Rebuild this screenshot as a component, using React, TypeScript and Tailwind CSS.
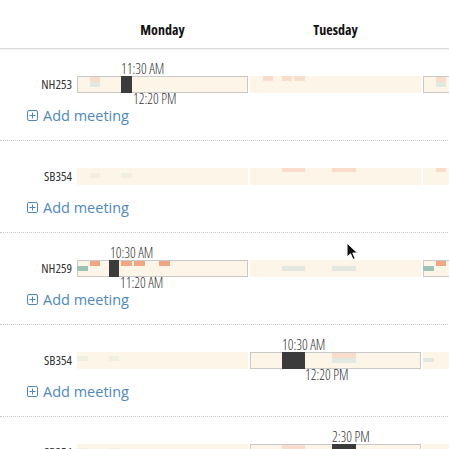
import React from "react";

type Blk = { x: number; y: number; w: number; h: number; c: string };
type Cell = {
  bordered?: boolean;
  blocks: Blk[];
  top?: { x: number; t: string };
  bottom?: { x: number; t: string };
};
type Row = { label: string; cells: Cell[]; add?: boolean };

const S = "#f0a585";
const SF = "#f8ddcc";
const G = "#9cc3b5";
const GF = "#e3e9e0";
const GR = "#f1eee3";
const D = "#3b3b3b";

const rows: Row[] = [
  {
    label: "NH253",
    add: true,
    cells: [
      {
        bordered: true,
        blocks: [
          { x: 13, y: 1, w: 10, h: 5, c: SF },
          { x: 13, y: 6, w: 10, h: 5, c: GF },
          { x: 44, y: 0, w: 11, h: 17, c: D },
        ],
        top: { x: 44, t: "11:30 AM" },
        bottom: { x: 56, t: "12:20 PM" },
      },
      {
        blocks: [
          { x: 13, y: 0, w: 10, h: 5, c: SF },
          { x: 32, y: 0, w: 10, h: 5, c: SF },
          { x: 44, y: 0, w: 11, h: 5, c: SF },
        ],
      },
      {
        bordered: true,
        blocks: [
          { x: 13, y: 1, w: 10, h: 5, c: SF },
          { x: 13, y: 6, w: 10, h: 5, c: GF },
        ],
      },
    ],
  },
  {
    label: "SB354",
    add: true,
    cells: [
      {
        blocks: [
          { x: 13, y: 5, w: 10, h: 5, c: GR },
          { x: 44, y: 5, w: 11, h: 5, c: GR },
        ],
      },
      {
        blocks: [
          { x: 32, y: 0, w: 23, h: 4, c: SF },
          { x: 82, y: 0, w: 24, h: 4, c: SF },
        ],
      },
      { blocks: [{ x: 13, y: 0, w: 10, h: 4, c: SF }] },
    ],
  },
  {
    label: "NH259",
    add: true,
    cells: [
      {
        bordered: true,
        blocks: [
          { x: 0, y: 6, w: 11, h: 5, c: G },
          { x: 13, y: 1, w: 10, h: 5, c: S },
          { x: 44, y: 1, w: 11, h: 5, c: S },
          { x: 57, y: 1, w: 11, h: 5, c: S },
          { x: 82, y: 1, w: 11, h: 5, c: S },
          { x: 32, y: 0, w: 10, h: 17, c: D },
        ],
        top: { x: 33, t: "10:30 AM" },
        bottom: { x: 43, t: "11:20 AM" },
      },
      {
        blocks: [
          { x: 32, y: 6, w: 23, h: 5, c: GF },
          { x: 82, y: 6, w: 24, h: 5, c: GF },
        ],
      },
      {
        bordered: true,
        blocks: [
          { x: 0, y: 6, w: 11, h: 5, c: G },
          { x: 13, y: 1, w: 10, h: 5, c: S },
        ],
      },
    ],
  },
  {
    label: "SB354",
    add: true,
    cells: [
      {
        blocks: [
          { x: 0, y: 4, w: 11, h: 5, c: GR },
          { x: 32, y: 4, w: 10, h: 5, c: GR },
        ],
      },
      {
        bordered: true,
        blocks: [
          { x: 82, y: 1, w: 24, h: 5, c: SF },
          { x: 82, y: 6, w: 24, h: 5, c: GF },
          { x: 32, y: 0, w: 23, h: 17, c: D },
        ],
        top: { x: 32, t: "10:30 AM" },
        bottom: { x: 55, t: "12:20 PM" },
      },
      { blocks: [{ x: 0, y: 6, w: 11, h: 4, c: GF }] },
    ],
  },
  {
    label: "SB354",
    cells: [
      {
        blocks: [
          { x: 0, y: 4, w: 11, h: 5, c: GR },
          { x: 32, y: 4, w: 10, h: 5, c: GR },
        ],
      },
      {
        bordered: true,
        blocks: [
          { x: 32, y: 1, w: 23, h: 5, c: SF },
          { x: 82, y: 0, w: 24, h: 17, c: D },
        ],
        top: { x: 82, t: "2:30 PM" },
      },
      { blocks: [] },
    ],
  },
];

const cond = { fontFamily: "'Open Sans', sans-serif", fontStretch: "75%" } as React.CSSProperties;

function Bar({ cell }: { cell: Cell }) {
  return (
    <div className="relative w-[171px] h-[17px] shrink-0 bg-[#fdf5e7]">
      {cell.bordered && <div className="absolute inset-0 border border-[#c9c9c9]" />}
      {cell.blocks.map((b, i) => (
        <div
          key={i}
          className="absolute"
          style={{ left: b.x, top: b.y, width: b.w, height: b.h, background: b.c }}
        />
      ))}
      {cell.top && (
        <div
          className="absolute bottom-full text-[14px] leading-[15px] font-light text-[#333] whitespace-nowrap font-stretch-condensed"
          style={{ left: cell.top.x, ...cond }}
        >
          {cell.top.t}
        </div>
      )}
      {cell.bottom && (
        <div
          className="absolute top-[15px] text-[14px] leading-[15px] font-light text-[#333] whitespace-nowrap font-stretch-condensed"
          style={{ left: cell.bottom.x, ...cond }}
        >
          {cell.bottom.t}
        </div>
      )}
    </div>
  );
}

export default function App() {
  return (
    <div className="relative w-[449px] h-[449px] overflow-hidden bg-white">
      <div className="w-[700px]">
        <div className="h-[49px] flex items-start pt-[19px] border-b border-[#dcdcdc] shadow-[0_1px_2px_rgba(0,0,0,0.06)]">
          <div className="w-[77px] shrink-0" />
          <div className="flex gap-[2px]">
            {["Monday", "Tuesday", ""].map((d, i) => (
              <div
                key={i}
                className="w-[171px] text-center text-[14px] leading-[21px] font-bold text-[#111] font-stretch-condensed"
                style={cond}
              >
                {d}
              </div>
            ))}
          </div>
        </div>
        {rows.map((r, i) => (
          <div key={i} className="h-[92px] border-b border-dotted border-[#c8c8c8] flex flex-col">
            <div className="flex items-center mt-[26px]">
              <div
                className="w-[77px] shrink-0 pr-[5px] text-right text-[13px] font-normal text-[#333] font-stretch-condensed"
                style={cond}
              >
                {r.label}
              </div>
              <div className="flex gap-[2px]">
                {r.cells.map((c, j) => (
                  <Bar key={j} cell={c} />
                ))}
              </div>
            </div>
            {r.add && (
              <div
                className="flex items-center gap-[5px] ml-[27px] mt-[10px] text-[14.5px] text-[#4f88bc]"
                style={{ fontFamily: "'Open Sans', sans-serif" }}
              >
                <svg width="11" height="11" viewBox="0 0 11 11" fill="none" stroke="#4f88bc" strokeWidth="1">
                  <rect x="0.5" y="0.5" width="10" height="10" rx="1.5" />
                  <path d="M5.5 2.5v6M2.5 5.5h6" />
                </svg>
                <span>Add meeting</span>
              </div>
            )}
          </div>
        ))}
      </div>
      <svg className="absolute left-[346px] top-[242px]" width="13" height="19" viewBox="0 0 13 19">
        <path d="M1 1 L1 15 L4.5 11.8 L7 17.5 L9.2 16.5 L6.8 11 L11.5 11 Z" fill="#111" stroke="#fff" strokeWidth="1" />
      </svg>
    </div>
  );
}
